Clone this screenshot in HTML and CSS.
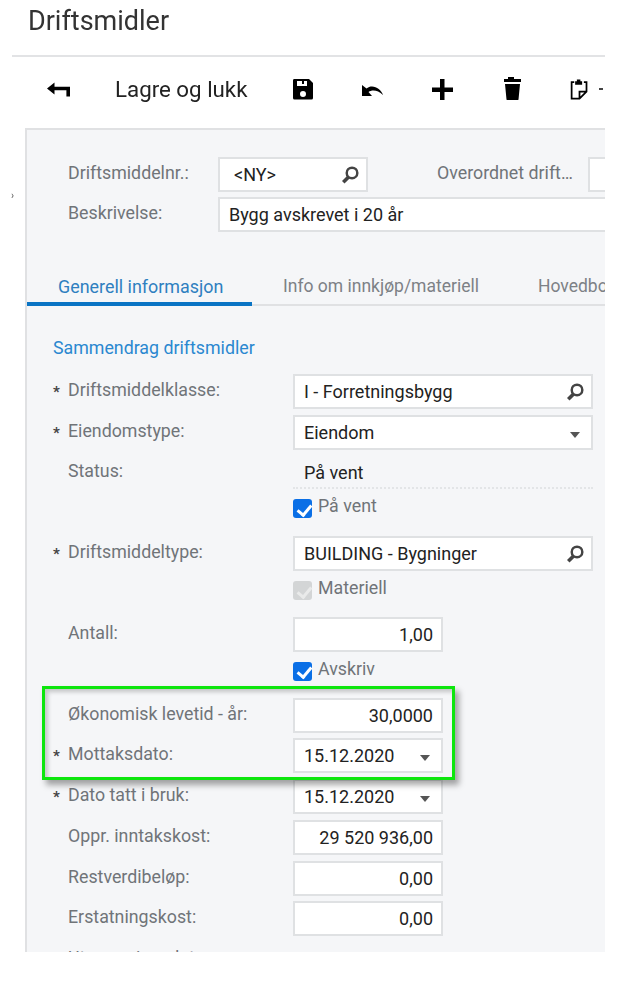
FILE: index.html
```html
<!DOCTYPE html>
<html lang="no">
<head>
<meta charset="utf-8">
<title>Driftsmidler</title>
<link rel="stylesheet" href="styles.css">
</head>
<body>
<div class="page">
  <h1 class="title">Driftsmidler</h1>
  <div class="toolbar">
    <svg class="ic ic-back" viewBox="0 0 24 15"><path d="M1 6.500 8.500 .5v4.200H24V14.500h-3.600V8.300H8.500v4.200z"/></svg>
    <span class="save-close">Lagre og lukk</span>
    <svg class="ic ic-24" viewBox="0 0 24 24"><path fill-rule="evenodd" d="M3 2h15l4 4v15a1.500 1.500 0 0 1-1.500 1.500h-17A1.500 1.500 0 0 1 2 21V3.500A1.500 1.500 0 0 1 3 2zm3 2v5h10V4h-3v3h-2V4zm6 10a3 3 0 1 0 0 6 3 3 0 0 0 0-6z"/></svg>
    <svg class="ic ic-24" viewBox="0 0 24 24"><path d="M2 8v11h10l-3.500-4c3.500-2.500 9.500-2 14.500 3C21 11 12 6.500 6.500 11.500z"/></svg>
    <svg class="ic ic-24" viewBox="0 0 24 24"><path d="M11 2h4.500v8.500H24V15h-8.500v8H11v-8H3v-4.500h8z"/></svg>
    <svg class="ic ic-24" viewBox="0 0 24 24"><path d="M10 0h6v2h7v3H6V2h4zM7 7h15l-1.500 15.500a1 1 0 0 1-1 .5h-10a1 1 0 0 1-1-.5z"/></svg>
    <svg class="ic ic-paste" viewBox="0 0 24 24"><path fill="none" stroke="#000" stroke-width="2" d="M6 4H3v19h9l8-8V4h-3M12 23v-8h8"/><path d="M7 3h2V1h4v2h2v4H7z"/></svg>
    <span class="caret-tick"></span>
  </div>
  <div class="panel">
    <span class="side-tick">›</span>
    <div class="head-row">
      <label class="lbl lbl-head">Driftsmiddelnr.:</label>
      <div class="input input-nr"><span class="nr-text">&lt;NY&gt;</span>
        <svg class="search" viewBox="0 0 16 16"><circle cx="9.800" cy="6.200" r="4.700" fill="none" stroke="#444" stroke-width="2.200"/><path d="M6.500 10 2 14.500" stroke="#444" stroke-width="3.200"/></svg>
      </div>
      <label class="lbl lbl-parent">Overordnet drift…</label>
      <div class="input input-parent"></div>
    </div>
    <div class="head-row head-second">
      <label class="lbl lbl-head">Beskrivelse:</label>
      <div class="input input-desc">Bygg avskrevet i 20 år</div>
    </div>

    <div class="tabs">
      <span class="tab tab-active">Generell informasjon</span>
      <span class="tab tab-info">Info om innkjøp/materiell</span>
      <span class="tab tab-ledger">Hovedbok</span>
    </div>

    <h2 class="section">Sammendrag driftsmidler</h2>

    <div class="form">
      <div class="row"><label class="lbl req">Driftsmiddelklasse:</label>
        <div class="input wide">I - Forretningsbygg
          <svg class="search" viewBox="0 0 16 16"><circle cx="9.800" cy="6.200" r="4.700" fill="none" stroke="#444" stroke-width="2.200"/><path d="M6.500 10 2 14.500" stroke="#444" stroke-width="3.200"/></svg>
        </div></div>
      <div class="row"><label class="lbl req">Eiendomstype:</label>
        <div class="input wide">Eiendom<span class="arrow"></span></div></div>
      <div class="row row-status"><label class="lbl">Status:</label>
        <div class="static">På vent</div></div>
      <div class="row-check row-check-first"><span class="check"></span><span class="check-text">På vent</span></div>
      <div class="row"><label class="lbl req">Driftsmiddeltype:</label>
        <div class="input wide">BUILDING - Bygninger
          <svg class="search" viewBox="0 0 16 16"><circle cx="9.800" cy="6.200" r="4.700" fill="none" stroke="#444" stroke-width="2.200"/><path d="M6.500 10 2 14.500" stroke="#444" stroke-width="3.200"/></svg>
        </div></div>
      <div class="row-check"><span class="check check-off"></span><span class="check-text">Materiell</span></div>
      <div class="row"><label class="lbl">Antall:</label>
        <div class="input num">1,00</div></div>
      <div class="row-check"><span class="check"></span><span class="check-text">Avskriv</span></div>
      <div class="row"><label class="lbl">Økonomisk levetid - år:</label>
        <div class="input num">30,0000</div></div>
      <div class="row"><label class="lbl req">Mottaksdato:</label>
        <div class="input date">15.12.2020<span class="arrow"></span></div></div>
      <div class="row"><label class="lbl req">Dato tatt i bruk:</label>
        <div class="input date">15.12.2020<span class="arrow"></span></div></div>
      <div class="row"><label class="lbl">Oppr. inntakskost:</label>
        <div class="input num">29 520 936,00</div></div>
      <div class="row"><label class="lbl">Restverdibeløp:</label>
        <div class="input num">0,00</div></div>
      <div class="row"><label class="lbl">Erstatningskost:</label>
        <div class="input num">0,00</div></div>
      <div class="row"><label class="lbl">Utrangeringsdato:</label></div>
    </div>
    <div class="highlight"></div>
  </div>
</div>
</body>
</html>
```

FILE: styles.css
```css
* { box-sizing: border-box; }
html, body { margin: 0; padding: 0; background: #fff; }
body { font-family: Roboto, "Liberation Sans", sans-serif; color: #222; }
.page { width: 605px; height: 952px; overflow: hidden; position: relative; filter: blur(.35px); }
.title { margin: 0 0 0 12px; height: 57px; padding: 5px 0 0 16px; font-size: 27px; line-height: 32px; font-weight: 400; color: #333; border-bottom: 2px solid #e2e3e5; }
.toolbar { height: 71px; display: flex; align-items: center; padding: 0 0 7px 46px; gap: 45px; }
.ic { display: block; flex: none; }
.ic-back { width: 24px; height: 15px; }
.ic-24 { width: 24px; height: 24px; }
.ic-paste { width: 21px; height: 24px; margin-left: 2px; }
.save-close { width: 131px; font-size: 22.300px; color: #222; white-space: nowrap; }
.caret-tick { width: 4px; height: 2px; background: #444; margin-left: -36px; }
.panel { position: relative; height: 824px; margin-left: 25px; width: 600px; background: #f5f6f8; border-left: 2px solid #e0e1e3; border-top: 2px solid #e0e1e3; }
.side-tick { position: absolute; left: -16px; top: 60px; font-size: 10px; color: #555; }
.lbl { font-size: 17.800px; color: #707478; white-space: nowrap; flex: none; }
.head-row { display: flex; align-items: center; height: 35px; margin-top: 27px; padding-left: 41px; }
.head-second { margin-top: 5px; }
.lbl-head { width: 150px; padding-bottom: 4px; }
.lbl-parent { margin-left: 69px; width: 151px; padding-bottom: 4px; }
.input { position: relative; display: flex; align-items: center; height: 35px; background: #fff; border: 2px solid #dfe1e3; padding: 0 8px 0 9px; font-size: 18px; color: #222; white-space: nowrap; flex: none; }
.input-nr { width: 150px; padding-left: 14px; }
.input-parent { width: 40px; }
.input-desc { width: 420px; }
.search { position: absolute; right: 7px; top: 7px; width: 18px; height: 18px; }
.tabs { display: flex; height: 41px; margin-top: 33px; border-bottom: 2px solid #e0e1e3; font-size: 17.500px; color: #7d8186; }
.tab { display: block; white-space: nowrap; height: 41px; padding-top: 11px; }
.tab-active { width: 225px; padding-left: 31px; font-size: 17.900px; color: #2e7fc0; border-bottom: 4px solid #0a74c4; margin-bottom: -2px; }
.tab-info { margin-left: 31px; width: 255px; }
.section { margin: 31px 0 0 26px; font-size: 17.800px; line-height: 22px; font-weight: 400; color: #2a88d0; }
.form { margin-top: 15px; padding-left: 26px; }
.row { display: flex; align-items: flex-start; height: 40.700px; }
.row > .lbl { position: relative; width: 240px; padding-left: 15px; line-height: 32px; }
.req::before { content: "*"; position: absolute; left: 0; top: 2px; color: #444; font-size: 15px; font-weight: 700; }
.wide { width: 300px; }
.num { width: 150px; justify-content: flex-end; }
.date { width: 150px; }
.arrow { position: absolute; right: 11px; top: 15px; border: 5.500px solid transparent; border-top: 6px solid #555; border-bottom: 0; }
.row-status { height: 34px; }
.static { width: 300px; height: 34px; padding: 6px 0 0 11px; font-size: 18px; line-height: 24px; border-bottom: 2px dotted #e3e5e7; color: #222; }
.row-check { display: flex; height: 40px; margin-left: 240px; padding-top: 4px; }
.row-check-first { height: 47px; padding-top: 10px; }
.check { position: relative; width: 19px; height: 19px; flex: none; border-radius: 3px; background: #0a6fe6; }
.check::after { content: ""; position: absolute; left: 6.500px; top: 2.500px; width: 6px; height: 11px; border: solid #fff; border-width: 0 3px 3px 0; transform: rotate(40deg); }
.check-off { background: #d3d5d6; }
.check-off::after { border-color: #e9eaea; }
.check-text { margin: -4px 0 0 6px; font-size: 17.800px; color: #707478; line-height: 22px; }
.highlight { position: absolute; left: 15px; top: 556px; width: 413px; height: 94px; border: 3px solid #0de60d; box-shadow: 4px 5px 6px rgba(0,0,0,.35), inset 3px 3px 4px rgba(0,0,0,.2); pointer-events: none; }
```
